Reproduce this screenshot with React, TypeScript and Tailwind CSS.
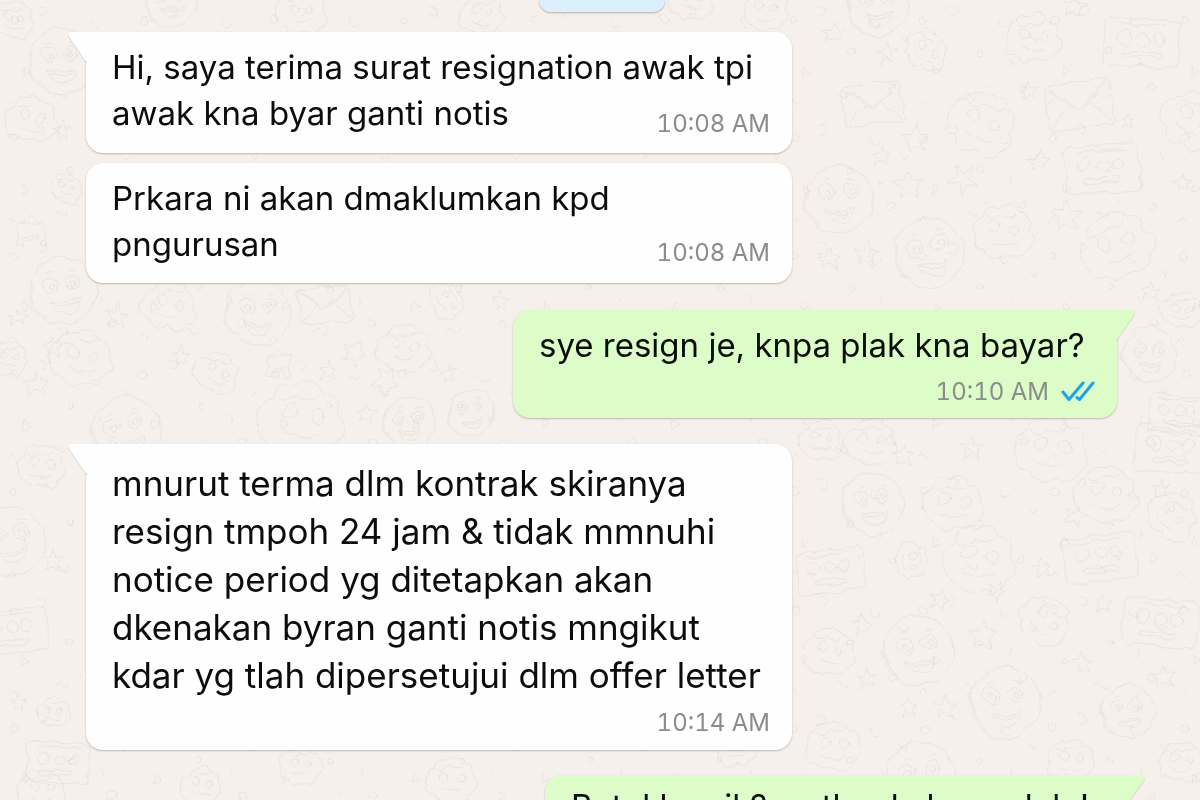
import React from 'react'
import clsx from 'clsx'

interface Message {
  id: number
  from: 'them' | 'me'
  text: string
  time: string
  /** First bubble of a run carries the little corner tail. */
  tail: boolean
  /** Outer width and spacing of the row. */
  row: string
  /** Text padding, size and leading. */
  body: string
  meta: string
}

const messages: Message[] = [
  {
    id: 1,
    from: 'them',
    text: 'Hi, saya terima surat resignation awak tpi awak kna byar ganti notis',
    time: '10:08 AM',
    tail: true,
    row: 'mt-5 max-w-[706px]',
    body: 'pt-3 text-[33px] leading-[46px]',
    meta: '-mt-7 pb-[13px]',
  },
  {
    id: 2,
    from: 'them',
    text: 'Prkara ni akan dmaklumkan kpd pngurusan',
    time: '10:08 AM',
    tail: false,
    row: 'mt-[10px] max-w-[706px]',
    body: 'pt-3 text-[33px] leading-[46px]',
    meta: '-mt-[30px] pb-[14px]',
  },
  {
    id: 3,
    from: 'me',
    text: 'sye resign je, knpa plak kna bayar?',
    time: '10:10 AM',
    tail: true,
    row: 'mt-[27px] mr-[10px] max-w-[604px]',
    body: 'pt-3 text-[33px] leading-[46px]',
    meta: 'mt-2 pb-[10px]',
  },
  {
    id: 4,
    from: 'them',
    text: 'mnurut terma dlm kontrak skiranya resign tmpoh 24 jam & tidak mmnuhi notice period yg ditetapkan akan dkenakan byran ganti notis mngikut kdar yg tlah dipersetujui dlm offer letter',
    time: '10:14 AM',
    tail: true,
    row: 'mt-[26px] max-w-[706px]',
    body: 'pt-[15px] text-[35px] leading-[48px]',
    meta: 'mt-2 pb-[11px]',
  },
  {
    id: 5,
    from: 'me',
    text: 'Betul ke cik? sy tk ada baca dulu!',
    time: '10:15 AM',
    tail: true,
    row: 'mt-[25px] max-w-[582px]',
    body: 'pt-2 text-[33px] leading-[46px]',
    meta: 'mt-2 pb-[10px]',
  },
]

type Doodle = [kind: string, x: number, y: number, scale: number, turn: number]

const doodles: Doodle[] = [
  ['face', 60, 60, 33, 5], ['face', 62, 290, 34, 0], ['face', 257, 312, 33, 8], ['face', 125, 430, 35, -8],
  ['blob', 66, 188, 17, 0], ['house', 30, 230, 16, 0], ['blob', 168, 305, 30, 10], ['envelope', 324, 304, 26, -8],
  ['blob', 403, 348, 29, 0], ['blob', 300, 420, 46, 0], ['face', 408, 422, 26, 5], ['face', 470, 412, 23, 0],
  ['blob', 80, 358, 34, 0], ['blob', 8, 358, 20, 0], ['house', 278, 362, 14, 0], ['blob', 215, 372, 24, 20],
  ['blob', 445, 300, 20, 60], ['face', 10, 540, 34, 0], ['card', 12, 630, 36, -8], ['card', 58, 762, 32, 4],
  ['blob', 40, 466, 26, 0], ['blob', 52, 712, 18, 0], ['blob', 30, 120, 28, 0], ['blob', 12, 20, 22, 0],
  ['face', 877, 4, 31, 0], ['blob', 925, 50, 24, 30], ['blob', 1032, 38, 30, 0], ['card', 1142, 42, 38, 3],
  ['envelope', 872, 103, 29, -8], ['envelope', 1078, 104, 33, -9], ['blob', 980, 124, 38, 20],
  ['card', 1102, 168, 38, -4], ['blob', 1190, 120, 34, 30], ['face', 838, 198, 34, 5],
  ['face', 928, 252, 35, -5], ['blob', 1002, 232, 33, 0], ['blob', 1116, 246, 40, -25], ['face', 1149, 354, 27, 4],
  ['blob', 1180, 310, 22, 0], ['card', 1178, 414, 30, 5], ['blob', 820, 440, 24, 0], ['blob', 870, 442, 28, 0],
  ['face', 872, 503, 31, 0], ['blob', 952, 504, 33, 0], ['card', 1172, 448, 38, 4], ['blob', 1050, 450, 40, 0],
  ['blob', 1105, 494, 34, 0], ['card', 830, 570, 34, -9], ['blob', 978, 560, 40, 0], ['card', 1100, 557, 37, -8],
  ['blob', 1170, 515, 28, 40], ['card', 1160, 622, 38, 4], ['face', 917, 650, 35, 0], ['blob', 828, 652, 28, 0],
  ['blob', 1043, 620, 29, 40], ['face', 1004, 702, 36, 3], ['face', 1127, 710, 27, 0], ['blob', 832, 746, 30, 0],
  ['face', 920, 776, 35, 0], ['blob', 1070, 760, 26, 0], ['blob', 1180, 762, 24, 0], ['blob', 910, 560, 20, 80],
  ['blob', 40, 790, 26, 0], ['blob', 300, 765, 24, 0], ['blob', 450, 780, 28, 0], ['blob', 735, 750, 20, 0],
  ['blob', 200, 785, 22, 0], ['blob', 300, 12, 28, 0], ['blob', 480, 14, 24, 0], ['face', 170, 0, 26, 0],
  ['blob', 765, 10, 24, 0], ['blob', 690, 0, 24, 0],
  ['star', 833, 33, 11, 0], ['star', 1073, 6, 12, 8], ['star', 1028, 90, 9, 0], ['star', 915, 138, 14, 0],
  ['star', 880, 155, 10, 10], ['star', 907, 184, 15, 0], ['star', 1038, 161, 11, 0], ['star', 1126, 122, 8, 0],
  ['star', 866, 254, 14, 5], ['star', 1066, 216, 17, 0], ['star', 962, 178, 16, 40], ['star', 887, 52, 10, 0],
  ['star', 829, 258, 11, 0], ['star', 115, 315, 13, 5], ['star', 52, 347, 10, 0], ['star', 17, 317, 9, 0],
  ['star', 353, 352, 13, 30], ['star', 327, 371, 10, 0], ['star', 365, 413, 11, 0], ['star', 384, 380, 14, 40],
  ['star', 35, 384, 12, 0], ['star', 180, 355, 10, 0], ['star', 500, 300, 10, 0], ['star', 448, 372, 9, 0],
  ['star', 970, 447, 13, 0], ['star', 903, 455, 11, 0], ['star', 1160, 487, 9, 0], ['star', 938, 599, 10, 20],
  ['star', 1102, 603, 10, 0], ['star', 982, 634, 15, 0], ['star', 1082, 662, 11, 0], ['star', 1163, 676, 12, 0],
  ['star', 944, 706, 13, 0], ['star', 908, 708, 10, 0], ['star', 866, 678, 11, 0], ['star', 1074, 515, 12, 20],
  ['star', 1040, 567, 10, 0], ['star', 52, 560, 11, 0], ['star', 18, 702, 9, 0], ['star', 60, 130, 10, 0],
  ['star', 1150, 290, 10, 0], ['star', 1182, 182, 9, 0], ['star', 995, 590, 10, 30], ['star', 862, 624, 10, 0],
]

const stroke = { vectorEffect: 'non-scaling-stroke' as const }

const Wallpaper = (): React.JSX.Element => (
  <svg
    aria-hidden="true"
    className="pointer-events-none absolute inset-0 h-full w-full"
    fill="none"
    stroke="#b9b3aa"
    strokeOpacity={0.19}
    strokeLinecap="round"
    strokeLinejoin="round"
  >
    <defs>
      <filter id="wobble" x="0" y="0" width="100%" height="100%">
        <feTurbulence type="fractalNoise" baseFrequency="0.06" numOctaves={2} seed={4} />
        <feDisplacementMap in="SourceGraphic" scale={9} xChannelSelector="R" yChannelSelector="G" />
      </filter>
      <g id="face">
        <circle r="1" {...stroke} />
        <path d="M-.92 -.25A.96 .96 0 0 0 -.5 .8" {...stroke} />
        <circle cx="-.38" cy="-.16" r=".23" {...stroke} />
        <circle cx="-.34" cy="-.12" r=".09" {...stroke} />
        <circle cx=".3" cy="-.26" r=".22" {...stroke} />
        <circle cx=".33" cy="-.24" r=".09" {...stroke} />
        <path d="M-.35 .32Q.1 .4 .48 .2Q.46 .62 .08 .66Q-.24 .66 -.35 .32ZM-.24 .42Q.12 .5 .4 .32M-.5 -.5L-.3 -.56M.2 -.62L.4 -.6" {...stroke} />
      </g>
      <g id="envelope">
        <path d="M-.86 -.7H.86Q1 -.7 1 -.56V.56Q1 .7 .86 .7H-.86Q-1 .7 -1 .56V-.56Q-1 -.7 -.86 -.7Z" {...stroke} />
        <path d="M-.94 -.62L-.1 .12Q0 .2 .1 .12L.94 -.62M-.3 0L-.92 .62M.3 0L.92 .62" {...stroke} />
        <path d="M-.84 -.6L-.08 .06M.84 -.6L.08 .06" {...stroke} />
      </g>
      <g id="card">
        <path d="M-.85 -.62H.82Q.96 -.6 .96 -.46V.46Q.96 .6 .82 .62H-.85Q-1 .6 -1 .46V-.46Q-1 -.6 -.85 -.62Z" {...stroke} />
        <circle cx="-.5" cy="-.14" r=".18" {...stroke} />
        <circle cx="0" cy="-.1" r=".16" {...stroke} />
        <circle cx=".4" cy="-.12" r=".16" {...stroke} />
        <path d="M-.5 .26H.4Q.5 .32 .4 .38H-.5Q-.6 .32 -.5 .26ZM-.7 -.48H.6" {...stroke} />
      </g>
      <g id="blob">
        <path d="M-.9 .1Q-1 -.4 -.6 -.5Q-.5 -.9 -.1 -.8Q.3 -1 .5 -.6Q.9 -.6 .8 -.1Q1.1 .3 .7 .5Q.5 .9 .1 .7Q-.4 .9 -.6 .5Q-.9 .5 -.9 .1Z" {...stroke} />
        <circle cx="-.25" cy="-.2" r=".17" {...stroke} />
        <circle cx=".36" cy="-.1" r=".14" {...stroke} />
        <path d="M-.4 .24Q0 .5 .4 .3M-.5 -.5Q-.3 -.36 -.1 -.56Q.2 -.4 .4 -.54" {...stroke} />
      </g>
      <path id="star" d="M0 -1L.28 -.34L.96 -.3L.44 .14L.6 .82L0 .44L-.6 .82L-.44 .14L-.96 -.3L-.28 -.34Z" {...stroke} />
      <path id="house" d="M-.8 -.5H.8V.4L1 .9L.5 1L.4 .3H-.4L-.5 1L-1 .9L-.8 .4ZM-.5 -.5L0 -1L.5 -.5M-.3 .5H.3" {...stroke} />
      <pattern id="bits" width="130" height="118" patternUnits="userSpaceOnUse">
        <circle cx="14" cy="20" r="4" />
        <circle cx="70" cy="52" r="3" />
        <circle cx="112" cy="88" r="4" />
        <path d="M38 8q6 -4 8 2t-6 6M92 18q-5 5 1 8t7 -3M24 66l6 5 -7 4zM54 96q4 -6 8 0t6 -2M100 60q4 4 0 8M8 104l5 -5 4 6M76 84l3 3M120 36l4 6 4 -5" />
      </pattern>
    </defs>
    <g filter="url(#wobble)">
      <rect width="100%" height="100%" fill="url(#bits)" stroke="none" />
      {doodles.map(([kind, x, y, scale, turn]) => (
        <use
          key={`${kind}-${x}-${y}`}
          href={`#${kind}`}
          transform={`translate(${x + 1} ${y + 1}) rotate(${turn}) scale(${scale})`}
        />
      ))}
    </g>
  </svg>
)

const Tail = ({ mine }: { mine: boolean }): React.JSX.Element => (
  <svg
    aria-hidden="true"
    viewBox="0 0 20 31"
    className={clsx(
      'absolute top-0 h-[31px] w-5',
      mine ? '-right-[19px] text-[#dcfcc8]' : '-left-[19px] -scale-x-100 text-[#fefefe]',
    )}
  >
    <path d="M0 1H16.500Q20.500 1.500 18 6L1 30.500H0Z" fill="#cfcac3" />
    <path d="M0 0H16Q20.500 .5 18 5L1 29.500H0Z" fill="currentColor" />
  </svg>
)

const ReadTicks = (): React.JSX.Element => (
  <svg
    role="img"
    aria-label="Read"
    viewBox="0 0 34 22"
    className="h-[22px] w-[34px]"
    fill="none"
    stroke="#1ba5e8"
    strokeWidth="3"
    strokeLinecap="round"
    strokeLinejoin="round"
  >
    <path d="M2 11L8 18.500L22 2" />
    <path d="M16 16.500L18.500 18.500L32 2" />
  </svg>
)

const Bubble = ({ message }: { message: Message }): React.JSX.Element => {
  const { from, text, time, tail, row, body, meta } = message
  const mine = from === 'me'
  return (
    <li
      className={clsx(
        'relative w-full rounded-[17px] shadow-[0_1px_2px_rgba(90,80,70,0.35)]',
        mine ? 'self-end bg-[#dcfcc8]' : 'self-start bg-[#fefefe]',
        tail && (mine ? 'rounded-tr-none' : 'rounded-tl-none'),
        row,
      )}
    >
      {tail && <Tail mine={mine} />}
      <p className={clsx('pr-6 pl-[26px] text-[#0b0c0c]', body)}>{text}</p>
      <div
        className={clsx(
          'flex items-center justify-end gap-3 pr-[22px] text-2xl leading-8 text-[#8b8d8b] tabular-nums',
          meta,
        )}
      >
        <time>{time}</time>
        {mine && <ReadTicks />}
      </div>
    </li>
  )
}

export default function App(): React.JSX.Element {
  return (
    <main className="relative h-screen overflow-hidden bg-[#f5f0eb] font-[Inter,sans-serif]">
      <Wallpaper />
      <div className="relative flex flex-col pr-[73px] pl-[86px]">
        <div className="mr-[10px] h-3 w-[126px] self-center rounded-b-2xl bg-[#dceffd] shadow-[0_1px_2px_rgba(90,80,70,0.4)]" />
        <ol className="flex flex-col">
          {messages.map((message) => (
            <Bubble key={message.id} message={message} />
          ))}
        </ol>
      </div>
    </main>
  )
}
